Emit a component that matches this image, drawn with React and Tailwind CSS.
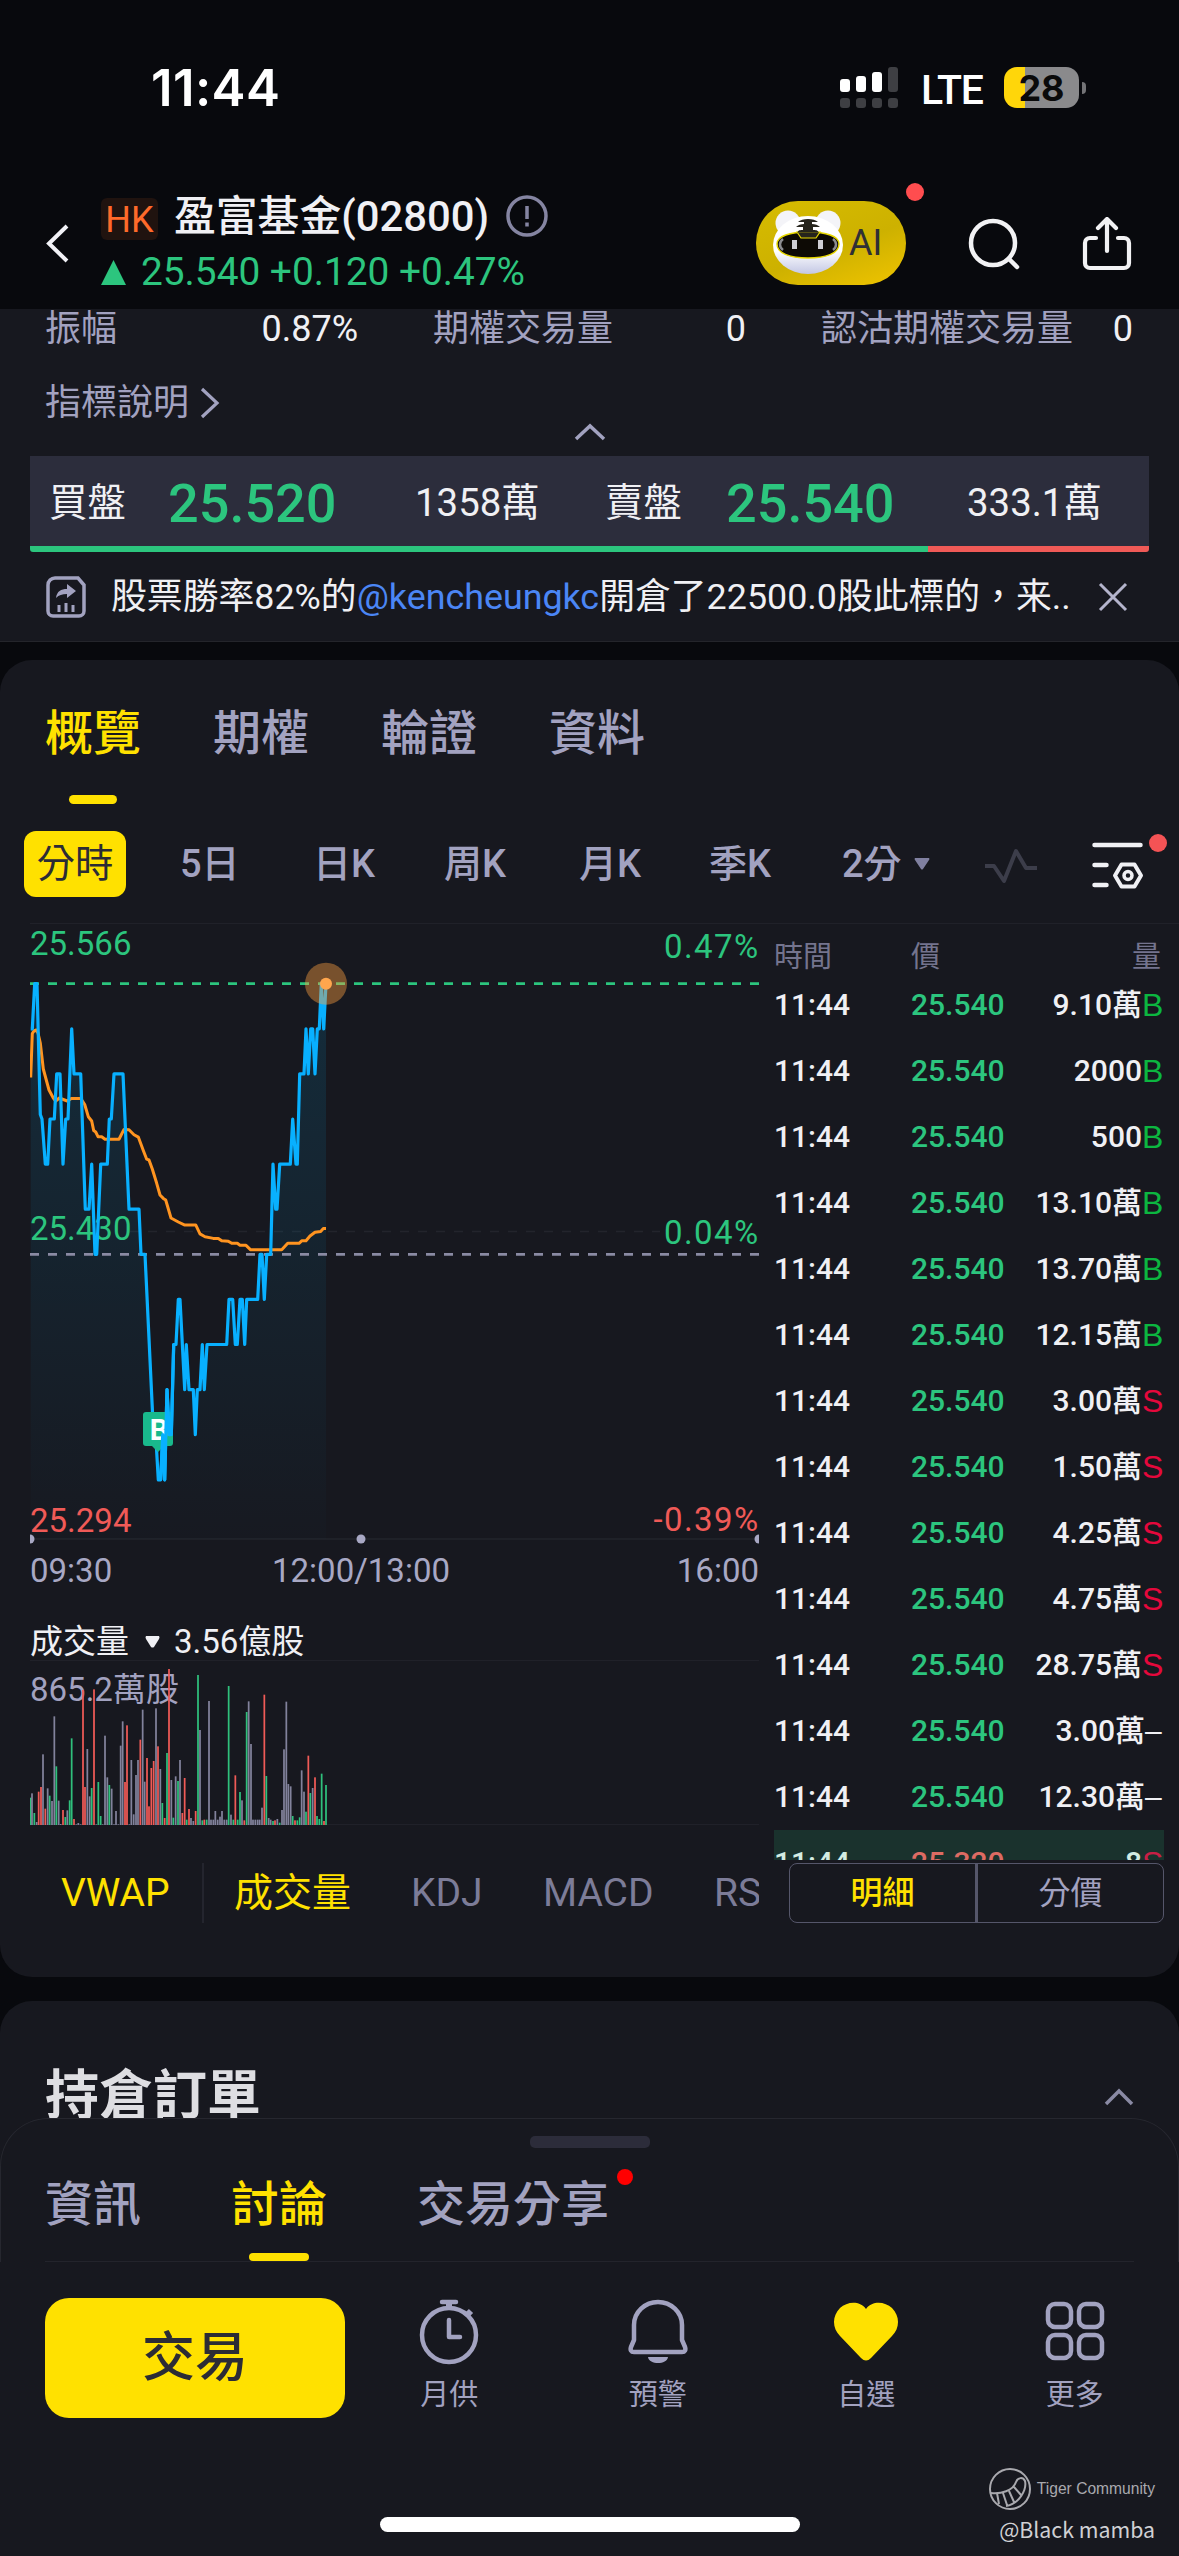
const LINE_TOP = 983.7;
const TICK = 45.1;

// [x, ticks below the day high]
const PRICE = [
  [30.7, 1], [32.3, 1], [34.7, 0], [37, 0], [40.3, 2.9], [42, 3], [45.3, 4], [47.7, 4], [50, 3], [54.3, 3], [56.7, 2], [60, 2],
  [63, 4], [65.7, 3], [68, 3], [71.7, 1], [74, 2], [80.7, 2], [85.3, 5], [89, 5], [91.7, 4], [95, 6], [96.7, 6], [100.7, 4],
  [107.3, 4], [109.3, 3], [111.3, 3], [114, 2], [123, 2], [129, 5], [139, 5], [141, 6], [145, 6], [152.7, 9.6], [155.7, 10],
  [158.3, 11], [160.7, 11], [162.7, 10], [164.7, 11], [167, 9], [169.3, 10], [171.3, 10], [173.7, 8], [176, 8], [178.3, 7],
  [180, 7], [184.7, 9], [186.3, 8], [189, 9], [193.3, 9], [195.3, 10], [197.3, 9], [200, 9], [202.3, 8], [204.3, 9], [207, 8],
  [226.7, 8], [229, 7], [232.7, 7], [235.3, 8], [237.3, 8], [240, 7], [242.3, 7], [244.7, 8], [246.7, 7], [257.7, 7], [260, 6],
  [262, 6], [264.3, 7], [266.7, 6], [270.7, 6], [273, 4], [275.7, 5], [277, 5], [279.7, 4], [290.3, 4], [292.7, 3], [296, 4],
  [297.3, 4], [299.7, 2], [304, 2], [306, 1], [308.3, 2], [310.7, 1], [312.7, 1], [315, 2], [317.3, 1], [319.3, 1], [321.3, 0],
  [323.7, 1], [326, 0],
];

const VWAP = [
  [30.7, 1077.5], [32.3, 1033.5], [34, 1031], [36.3, 1030], [38, 1033], [40.3, 1043], [43.3, 1069], [49, 1090], [53.3, 1098],
  [55.7, 1101], [59.3, 1098], [63.3, 1099.5], [67.3, 1101], [71.3, 1098.4], [80.7, 1098.4], [84.7, 1104.5], [88.3, 1116.7],
  [91.7, 1121], [93.7, 1130.6], [95.7, 1132], [98, 1136.7], [101.7, 1136.7], [105, 1139.2], [119, 1139.2], [124, 1129.4],
  [129, 1129.8], [134, 1134.7], [138.3, 1137.1], [143.3, 1150.6], [146.7, 1159.2], [149, 1160], [152.3, 1169], [156.7, 1183.3],
  [160, 1195], [163.3, 1198.4], [165.7, 1200], [171, 1218], [178.3, 1222], [184.3, 1224.9], [195.7, 1224.9], [200, 1233.9],
  [205, 1236.7], [213.3, 1238.4], [218.3, 1238.4], [221.7, 1240.8], [228.3, 1241.2], [231.7, 1243.3], [237.3, 1243.3],
  [240, 1245.3], [246, 1245.3], [250.7, 1249.8], [281.7, 1249.8], [287.7, 1243.3], [299, 1243.3], [301.7, 1240.8], [306, 1240.8],
  [310, 1236], [315, 1232.3], [320.7, 1231.4], [323.3, 1228.6], [326, 1228.6],
];

const BAR_COLOR = { g: '#2fc07c', r: '#f05a57', p: '#82829c' };

// x, top, colour on a 3x grid, baseline at 852
const VOLUME =
  '92 770 g,96 757 p,103 816 g,110 843 p,116 752 r,123 738 r,129 640 p,136 803 r,143 742 p,149 764 g,156 780 p,163 526 p,169 676 g,176 779 p,182 849 p,189 807 r,196 828 g,202 808 p,209 778 g,215 592 g,222 834 r,229 850 p,235 846 p,242 850 p,249 447 r,255 738 r,262 624 p,269 766 p,275 741 g,282 445 r,289 850 p,295 723 g,302 825 g,308 850 p,315 584 p,322 709 p,328 732 g,335 743 p,342 850 p,348 810 p,355 850 p,362 614 p,368 541 p,375 723 r,381 553 r,388 850 p,394 657 p,401 820 p,408 702 p,414 657 p,421 596 r,428 506 p,434 722 p,441 651 r,447 796 r,454 681 r,461 660 r,468 502 p,474 616 r,481 684 p,487 786 g,494 831 r,501 636 g,507 384 r,514 717 p,520 830 g,527 706 p,534 720 g,540 657 p,547 816 r,554 711 r,560 836 g,567 804 r,573 831 p,580 840 p,587 810 r,594 402 g,600 567 p,607 838 g,613 836 r,620 836 g,627 480 p,633 836 p,640 836 p,646 810 p,653 836 p,660 827 p,666 810 p,673 836 p,680 836 p,686 435 g,693 821 p,700 836 g,706 703 r,713 836 g,720 753 g,726 778 p,733 838 r,740 513 g,746 481 p,753 609 p,759 836 p,766 836 p,773 836 p,779 836 p,786 800 p,793 461 r,799 705 g,806 831 p,812 836 p,819 840 g,825 838 r,832 834 p,839 845 g,846 807 p,852 625 p,859 482 p,865 729 p,872 736 p,878 825 g,885 838 r,892 838 g,899 829 g,905 688 p,912 752 p,918 812 g,925 644 r,931 756 g,938 741 p,945 709 r,951 825 g,958 834 g,965 698 g,972 840 r,978 732 g'
    .split(',')
    .map((s) => s.split(' '));

const TRADES = [
  ['9.10萬', 'B'],
  ['2000', 'B'],
  ['500', 'B'],
  ['13.10萬', 'B'],
  ['13.70萬', 'B'],
  ['12.15萬', 'B'],
  ['3.00萬', 'S'],
  ['1.50萬', 'S'],
  ['4.25萬', 'S'],
  ['4.75萬', 'S'],
  ['28.75萬', 'S'],
  ['3.00萬', '–'],
  ['12.30萬', '–'],
];

const toPoints = (data) => data.map(([x, t]) => `${x},${(LINE_TOP + t * TICK).toFixed(1)}`).join(' ');

function StatusBar() {
  return (
    <div className="flex h-[160px] shrink-0 items-start pt-[60px] font-['Inter'] text-white">
      <div className="ml-[151px] w-[689px] text-[51px] leading-[56px] font-semibold tracking-[0.4px]">11:44</div>
      <svg className="mt-[7px] h-[41px] w-[58px]" viewBox="0 0 58 41">
        <g fill="#fff">
          <rect x="0" y="12" width="10" height="13" rx="3" />
          <rect x="16" y="9" width="10" height="16" rx="3" />
          <rect x="32" y="5" width="10" height="20" rx="3" />
        </g>
        <g fill="#3e3f43">
          <rect x="48" y="0" width="10" height="25" rx="3" />
          <rect x="0" y="31" width="10" height="10" rx="3" />
          <rect x="16" y="31" width="10" height="10" rx="3" />
          <rect x="32" y="31" width="10" height="10" rx="3" />
          <rect x="48" y="31" width="10" height="10" rx="3" />
        </g>
      </svg>
      <div className="ml-[23px] w-[83px] font-['Roboto'] text-[41px] leading-[60px] font-medium tracking-[-1.2px]">LTE</div>
      <div className="mt-[7px] flex h-[41px] w-[75px] items-center justify-center overflow-hidden rounded-[13px] bg-[linear-gradient(90deg,#ffd60a_21px,#8a8a8c_21px)] text-[36px] leading-none font-bold text-[#0a0a0a]">
        28
      </div>
      <div className="mt-[22px] ml-[3px] h-[12px] w-[4px] rounded-r-full bg-[#737376]" />
    </div>
  );
}

function TigerBot() {
  return (
    <svg className="h-[66px] w-[72px]" viewBox="0 0 72 66">
      <defs>
        <linearGradient id="bot" x1="0" y1="0" x2="0" y2="1">
          <stop offset="0.6" stopColor="#fff" />
          <stop offset="1" stopColor="#c3c7e4" />
        </linearGradient>
      </defs>
      <circle cx="15" cy="13" r="12.500" fill="#f4f4f8" />
      <circle cx="55" cy="13" r="12.500" fill="#f4f4f8" />
      <ellipse cx="35" cy="35" rx="35" ry="29" fill="url(#bot)" />
      <path d="M4 34c0-8 13-12 31-12s31 4 31 12c0 9-12 14-31 14S4 43 4 34Z" fill="#0d0a05" stroke="#e8d800" strokeWidth="1.500" />
      <path d="M24 22l4 6h15l4-6Z" fill="#26241c" stroke="#e8d800" strokeWidth="1.200" />
      <path d="M35 9c-4 0-8 1-10 3h6v2c-3 0-6 1-8 3h7v3c-3 0-4 0-6 2.500h22c-2-2.500-3-2.500-6-2.500v-3h7c-2-2-5-3-8-3v-2h6c-2-2-6-3-10-3Z" fill="#26241c" />
      <path d="M10 29c-4 3-4 8 0 11M60 29c4 3 4 8 0 11" stroke="#8d8d90" strokeWidth="2.500" fill="none" />
      <rect x="19" y="30" width="5" height="9" fill="#cfcfd4" />
      <rect x="45" y="30" width="5" height="9" fill="#cfcfd4" />
    </svg>
  );
}

function Header() {
  return (
    <div className="flex h-[149px] shrink-0">
      <svg className="mt-[64px] ml-[46px] h-[39px] w-[24px]" viewBox="0 0 24 39" fill="none" stroke="#f2f2f7" strokeWidth="4">
        <path d="M21 2L3 19.500L21 37" />
      </svg>
      <div className="ml-[31px] w-[655px]">
        <div className="mt-[32px] flex h-[48px] items-center">
          <span className="mt-[6px] flex h-[42px] w-[57px] items-center justify-center rounded-[6px] bg-[#20130f] pt-[2px] text-[36px] leading-none text-[#ff6a2a]">HK</span>
          <span className="ml-[16px] w-[332px] pt-px text-[41.800px] leading-[48px] font-medium whitespace-nowrap">盈富基金(02800)</span>
          <svg className="h-[42px] w-[42px]" viewBox="0 0 42 42" fill="none" stroke="#8585a2" strokeWidth="3.500">
            <circle cx="21" cy="21" r="19" />
            <path d="M21 11v13M21 27.500v4" />
          </svg>
        </div>
        <div className="mt-[9px] flex h-[46px] items-center text-[#2cc57e]">
          <svg className="h-[25px] w-[25px]" viewBox="0 0 25 25">
            <path d="M12.500 0L25 25H0Z" fill="currentColor" />
          </svg>
          <span className="ml-[15px] text-[38.800px] leading-[46px] whitespace-nowrap">25.540 +0.120 +0.47%</span>
        </div>
      </div>
      <div className="relative mt-[41px] flex h-[84px] w-[150px] items-center rounded-full bg-[linear-gradient(160deg,#d6bc00_0%,#cdb100_55%,#f0c400_100%)] pl-[17px]">
        <TigerBot />
        <span className="ml-[4px] text-[36px] leading-none text-[#2f2f35]">AI</span>
        <span className="absolute -top-[18px] -right-[18px] h-[18px] w-[18px] rounded-full bg-[#ff4d4f]" />
      </div>
      <svg className="mt-[58px] ml-[62px] h-[52px] w-[52px]" viewBox="0 0 52 52" fill="none" stroke="#f2f2f4" strokeWidth="4.500" strokeLinecap="round">
        <circle cx="25" cy="25" r="22" />
        <path d="M41 41l8 8" />
      </svg>
      <svg className="mt-[57px] ml-[62px] h-[54px] w-[50px]" viewBox="0 0 50 54" fill="none" stroke="#f2f2f4" strokeWidth="4.200" strokeLinecap="round" strokeLinejoin="round">
        <path d="M14 21H8c-3 0-5 2-5 5v20c0 3 2 5 5 5h34c3 0 5-2 5-5V26c0-3-2-5-5-5h-6M25 34V3M16 11l9-9 9 9" />
      </svg>
    </div>
  );
}

function QuotePanel() {
  return (
    <div className="flex h-[333px] shrink-0 flex-col border-b border-[#24252b] bg-[#17181f] text-[36px]">
      <div className="flex h-[38px] items-center pt-[2px] leading-[36px] whitespace-nowrap">
        <span className="ml-[45px] text-[#a2a2c0]">振幅</span>
        <span className="w-[241px] text-right">0.87%</span>
        <span className="ml-[75px] text-[#a2a2c0]">期權交易量</span>
        <span className="w-[133px] text-right">0</span>
        <span className="ml-[75px] text-[#a2a2c0]">認沽期權交易量</span>
        <span className="w-[60px] text-right">0</span>
      </div>
      <div className="mt-[38px] flex h-[36px] items-center leading-[36px] text-[#a2a2c0]">
        <span className="ml-[45px]">指標說明</span>
        <svg className="ml-[11px] h-[32px] w-[20px]" viewBox="0 0 20 32" fill="none" stroke="#a2a2c0" strokeWidth="3.200">
          <path d="M2 2l15 14L2 30" />
        </svg>
      </div>
      <svg className="mx-auto mt-[2px] h-[18px] w-[32px]" viewBox="0 0 32 18" fill="none" stroke="#a2a2c0" strokeWidth="3.500">
        <path d="M2 16L16 3l14 13" />
      </svg>
      <div className="mx-[30px] mt-[15px] flex h-[90px] items-center bg-[#2c2d3c] pt-[4px] text-[38.400px] whitespace-nowrap">
        <span className="ml-[19px] w-[119px]">買盤</span>
        <span className="w-[247px] text-[54px] font-medium text-[#2cc57e]">25.520</span>
        <span className="w-[190px]">1358萬</span>
        <span className="w-[121px]">賣盤</span>
        <span className="w-[241px] text-[54px] font-medium text-[#2cc57e]">25.540</span>
        <span>333.1萬</span>
      </div>
      <div className="mx-[30px] flex h-[6px] overflow-hidden rounded-b-[3px]">
        <div className="w-[898px] bg-[#2cc57e]" />
        <div className="flex-1 bg-[#f05a57]" />
      </div>
      <div className="flex flex-1 items-center whitespace-nowrap">
        <svg className="ml-[46px] h-[42px] w-[40px]" viewBox="0 0 40 42" fill="none" stroke="#a2a2c0" strokeWidth="3.500">
          <path d="M9 2h23l6 7v26a5 5 0 0 1-5 5H7a5 5 0 0 1-5-5V9a7 7 0 0 1 7-7Z" />
          <path d="M10 22c1-7 5-9 11-9V8l9 7-9 7v-4c-5 0-8 1-11 4Z" fill="#a2a2c0" stroke="none" />
          <path d="M13 29v7M20 27v9M27 29v7" strokeWidth="3" />
        </svg>
        <span className="ml-[25px] w-[987px] text-[35.850px] leading-[44px]">
          股票勝率82%的<span className="text-[#4b86f5]">@kencheungkc</span>開倉了22500.0股此標的，来..
        </span>
        <svg className="h-[30px] w-[30px]" viewBox="0 0 30 30" fill="none" stroke="#b4b4cc" strokeWidth="3">
          <path d="M2 2l26 26M28 2L2 28" />
        </svg>
      </div>
    </div>
  );
}

function PriceChart() {
  const line = toPoints(PRICE);
  return (
    <svg className="block h-[676px] w-[729px] font-['Roboto']" viewBox="30 924 729 676" fontSize="33">
      <defs>
        <linearGradient id="area" x1="0" y1="983" x2="0" y2="1539" gradientUnits="userSpaceOnUse">
          <stop offset="0" stopColor="#00a8e8" stopOpacity="0.14" />
          <stop offset="1" stopColor="#00a8e8" stopOpacity="0.01" />
        </linearGradient>
      </defs>
      <path d="M30 1539H759" stroke="#23242c" strokeWidth="1.500" />
      <path d="M130 1231.400H660" stroke="#23242c" strokeWidth="1.500" strokeDasharray="9 9" />
      <polygon points={`30.700,1539 ${line} 326,1539`} fill="url(#area)" />
      <g fill="#2cc57e">
        <text x="30" y="955">25.566</text>
        <text x="30" y="1239.500">25.430</text>
        <text x="759.500" y="958.300" textAnchor="end" letterSpacing="1.400">0.47%</text>
        <text x="759.500" y="1243.700" textAnchor="end" letterSpacing="1.400">0.04%</text>
      </g>
      <g fill="#f05a57">
        <text x="30" y="1531.500">25.294</text>
        <text x="759.500" y="1530.800" textAnchor="end" letterSpacing="1.400">-0.39%</text>
      </g>
      <path d={`M30 ${LINE_TOP}H759`} stroke="#2cc57e" strokeWidth="2.800" strokeDasharray="9 9" />
      <path d="M30 1254.300H759" stroke="#8a8aa3" strokeWidth="2.800" strokeDasharray="9 9" />
      <polyline points={VWAP.map((p) => p.join(',')).join(' ')} fill="none" stroke="#ff9420" strokeWidth="3" strokeLinejoin="round" />
      <polyline points={line} fill="none" stroke="#08b0ff" strokeWidth="3.200" strokeLinejoin="round" />
      <path d="M146 1412h24q3 0 3 3v28q0 3-3 3h-6l-6 6-6-6h-6q-3 0-3-3v-28q0-3 3-3Z" fill="#19b98c" />
      <text x="159" y="1440" fontSize="29" fontWeight="700" fill="#fff" textAnchor="middle">B</text>
      <polyline points={toPoints(PRICE.slice(36, 44))} fill="none" stroke="#08b0ff" strokeWidth="3.200" strokeLinejoin="round" />
      <circle cx="326" cy={LINE_TOP} r="21" fill="#ffa240" fillOpacity="0.42" />
      <circle cx="326" cy={LINE_TOP} r="6" fill="#ffa64d" />
      <g fill="#a8a8c4">
        <circle cx="30" cy="1539" r="4.500" />
        <circle cx="361" cy="1539" r="4.500" />
        <circle cx="759" cy="1539" r="4.500" />
        <text x="30" y="1582">09:30</text>
        <text x="361" y="1582" textAnchor="middle">12:00/13:00</text>
        <text x="759" y="1582" textAnchor="end">16:00</text>
      </g>
    </svg>
  );
}

function VolumeChart() {
  return (
    <div className="relative h-[165px] border-t border-b border-[#202129]">
      <div className="pt-[9px] text-[33px] leading-[40px] text-[#a2a2c0]">865.2萬股</div>
      <svg className="absolute top-0 left-0 h-[164px] w-[729px]" viewBox="90 360 2187 492">
        {VOLUME.map(([x, top, c]) => (
          <rect key={x} x={x - 2.6} y={top} width="5.200" height={852 - top} fill={BAR_COLOR[c]} />
        ))}
      </svg>
    </div>
  );
}

function TradeTable() {
  return (
    <div className="ml-[15px] w-[390px]">
      <div className="flex h-[48px] items-center pt-[17px] text-[29px] leading-[30px] text-[#74748e]">
        <span className="w-[137px]">時間</span>
        <span className="flex-1">價</span>
        <span className="mr-[3px]">量</span>
      </div>
      <div className="h-[888px] overflow-hidden text-[30px] font-medium whitespace-nowrap">
        {TRADES.map(([vol, side], i) => (
          <div key={i} className="flex h-[66px] items-center leading-[30px]">
            <span className="w-[137px]">11:44</span>
            <span className="flex-1 text-[#2cc57e]">25.540</span>
            <span>{vol}</span>
            <span
              className={
                side === 'B'
                  ? "w-[22px] font-['Liberation_Sans'] text-[32px] font-normal text-[#0cb640]"
                  : side === 'S'
                    ? "w-[22px] font-['Liberation_Sans'] text-[32px] font-normal text-[#e5083c]"
                    : "mr-px w-[18px] font-['Liberation_Sans'] font-normal"
              }
            >
              {side}
            </span>
          </div>
        ))}
        <div className="flex h-[66px] items-center bg-[#1a322d] leading-[30px]">
          <span className="w-[137px] text-[#d3ece2]">11:44</span>
          <span className="flex-1 text-[#dd6b63]">25.320</span>
          <span className="text-[#d3ece2]">8</span>
          <span className="w-[22px] font-['Liberation_Sans'] text-[32px] font-normal text-[#c81f45]">S</span>
        </div>
      </div>
      <div className="mt-[3px] ml-[15px] flex h-[60px] items-center rounded-[8px] border border-[#55566a] text-center text-[32px] leading-none">
        <span className="flex-1 font-medium text-[#ffe100]">明細</span>
        <span className="h-full w-[3px] bg-[#55566a]" />
        <span className="flex-1 text-[#a2a2c0]">分價</span>
      </div>
    </div>
  );
}

function ChartCard() {
  return (
    <div className="mt-[18px] flex h-[1317px] shrink-0 flex-col rounded-[32px] bg-[#17181f]">
      <div className="flex h-[144px] gap-[72px] pt-[46px] pl-[45px] text-[48px] leading-[56px] font-medium text-[#a2a2c0]">
        <div className="flex flex-col items-center text-[#ffe100]">
          概覽
          <span className="mt-[33px] h-[9px] w-[48px] rounded-full bg-[#ffe100]" />
        </div>
        <span>期權</span>
        <span>輪證</span>
        <span>資料</span>
      </div>
      <div className="flex h-[119px] items-center pt-px pl-[24px] text-[38px] leading-none font-medium whitespace-nowrap text-[#a2a2c0]">
        <span className="flex h-[66px] w-[102px] items-center justify-center rounded-[12px] bg-[#ffe100] text-[38.500px] font-normal text-[#2c2c35]">分時</span>
        <span className="ml-[54px] w-[133px]">5日</span>
        <span className="w-[131px]">日K</span>
        <span className="w-[135px]">周K</span>
        <span className="w-[130px]">月K</span>
        <span className="w-[133px]">季K</span>
        <span className="w-[72px]">2分</span>
        <svg className="h-[12px] w-[16px]" viewBox="0 0 16 12">
          <path d="M1 0h14q1 1 0 2L9 11q-1 1-2 0L1 2q-1-1 0-2Z" fill="#8080a0" />
        </svg>
        <svg className="mt-[4px] ml-[55px] h-[36px] w-[52px]" viewBox="0 0 52 36" fill="none" stroke="#3c3d4a" strokeWidth="4" strokeLinejoin="round">
          <path d="M0 18h9l10 15L31 3l10 17h11" />
        </svg>
        <div className="relative mt-[4px] ml-[55px]">
          <svg className="h-[50px] w-[52px]" viewBox="0 0 52 50" fill="none" stroke="#f0f0f4" strokeWidth="4.500" strokeLinecap="round">
            <path d="M2.500 4h46M2.500 24h12M2.500 44h12" />
            <path d="M29.500 23.500h13l6.500 11-6.500 11h-13l-6.500-11z" strokeLinejoin="round" strokeWidth="4" />
            <circle cx="36" cy="34.500" r="4" strokeWidth="3.500" />
          </svg>
          <span className="absolute -top-[7px] -right-[23px] h-[18px] w-[18px] rounded-full bg-[#f45355]" />
        </div>
      </div>
      <div className="ml-[30px] flex border-t border-[#202129]">
        <div className="w-[729px]">
          <PriceChart />
          <div className="flex h-[60px] items-center pt-[23px] text-[33px] leading-[34px]">
            <span>成交量</span>
            <svg className="mr-[14px] ml-[16px] h-[12px] w-[15px]" viewBox="0 0 15 12">
              <path d="M1 0h13q1 1 0 3L9 11q-1.500 1-3 0L1 3q-1-2 0-3Z" fill="#f0f0f4" />
            </svg>
            <span>3.56億股</span>
          </div>
          <VolumeChart />
          <div className="mt-[38px] flex h-[60px] items-center overflow-hidden text-[39px] leading-none whitespace-nowrap text-[#7c7c98]">
            <span className="ml-[31px] w-[141px] shrink-0 text-[#ffe100]">VWAP</span>
            <span className="h-full w-[2px] shrink-0 bg-[#24252e]" />
            <span className="ml-[30px] w-[177px] shrink-0 text-[#ffe100]">成交量</span>
            <span className="w-[132px] shrink-0">KDJ</span>
            <span className="w-[171px] shrink-0">MACD</span>
            <span className="shrink-0">RSI</span>
          </div>
        </div>
        <TradeTable />
      </div>
    </div>
  );
}

function BottomSheet() {
  return (
    <div className="relative -mt-[64px] flex flex-1 flex-col rounded-t-[48px] bg-[#17181f]">
      <div className="h-[144px] rounded-t-[48px] border-x border-t border-[#26272f]">
        <div className="mx-auto mt-[17px] h-[12px] w-[120px] rounded-[5px] bg-[#2c2c3a]" />
        <div className="mx-[44px] mt-[24px] flex h-[90px] border-b border-[#23242c] pt-[5px] text-[48px] leading-[56px] font-medium text-[#a2a2c0]">
          <span>資訊</span>
          <div className="ml-[90px] flex flex-col items-center text-[#ffe100]">
            討論
            <span className="mt-[20px] h-[9px] w-[60px] rounded-full bg-[#ffe100]" />
          </div>
          <div className="relative ml-[90px]">
            交易分享
            <span className="absolute -top-[8px] -right-[24px] h-[16px] w-[16px] rounded-full bg-[#ff0000]" />
          </div>
        </div>
      </div>
      <div className="mt-[36px] flex h-[120px]">
        <div className="ml-[45px] flex w-[300px] items-center justify-center rounded-[24px] bg-[#ffe100] text-[53px] leading-none font-medium text-[#2c2c35]">交易</div>
        <div className="grid flex-1 grid-cols-4 text-[29px] leading-[34px] text-[#a2a2c0]">
          <div className="flex flex-col items-center">
            <svg className="mt-[1px] mb-[13px] h-[66px] w-[60px]" viewBox="0 0 60 66" fill="none" stroke="#a2a2c0" strokeWidth="4.500">
              <circle cx="30" cy="36" r="27" />
              <path d="M30 21v17h11" strokeLinejoin="round" strokeLinecap="round" />
              <path d="M23 3h14" strokeWidth="4.500" strokeLinecap="round" />
              <path d="M30 4v6M48 16l4-4" strokeWidth="6" />
            </svg>
            月供
          </div>
          <div className="flex flex-col items-center">
            <svg className="mt-[1px] mb-[13px] h-[66px] w-[60px]" viewBox="0 0 60 66" fill="none" stroke="#a2a2c0" strokeWidth="4.500" strokeLinejoin="round">
              <path d="M30 3C17 3 6 13 6 26v15L3 48c-1 3 0 5 3 5h48c3 0 4-2 3-5l-3-7V26C54 13 43 3 30 3Z" />
              <path d="M20 58c1 8 19 8 20 0Z" fill="#a2a2c0" stroke="none" />
            </svg>
            預警
          </div>
          <div className="flex flex-col items-center">
            <svg className="mt-[1px] mb-[13px] h-[66px] w-[66px]" viewBox="0 0 66 66">
              <path d="M33 10C26 1 14 3 7 9c-8 8-8 20 0 28l21 22q5 5 10 0l21-22c8-8 8-20 0-28C52 3 40 1 33 10Z" fill="#ffe100" />
            </svg>
            自選
          </div>
          <div className="flex flex-col items-center">
            <svg className="mt-[1px] mb-[13px] h-[66px] w-[60px]" viewBox="0 0 60 66" fill="none" stroke="#a2a2c0" strokeWidth="4.500">
              <rect x="3" y="5" width="23" height="23" rx="7" />
              <rect x="34" y="5" width="23" height="23" rx="7" />
              <rect x="3" y="36" width="23" height="23" rx="7" />
              <rect x="34" y="36" width="23" height="23" rx="7" />
            </svg>
            更多
          </div>
        </div>
      </div>
      <div className="absolute bottom-[24px] left-[380px] h-[15px] w-[420px] rounded-full bg-white" />
      <div className="absolute right-[24px] bottom-[10px] flex flex-col items-end">
        <div className="flex items-center gap-[6px] font-['Liberation_Sans'] text-[15.600px] leading-none text-[#a9a9ae]">
          <svg className="h-[42px] w-[42px]" viewBox="0 0 42 42" fill="none" stroke="#a9a9ae" strokeWidth="2">
            <circle cx="21" cy="21" r="20" />
            <path d="M2 25c10 1 22-2 25-11 2-5 7-5 9-1 2 9-6 23-19 25M8 25l2 11M14 25l4 12M20 23l5 11M25 19l7 8" />
          </svg>
          Tiger Community
        </div>
        <div className="mt-[2px] font-['Noto_Sans_CJK_TC'] text-[21.300px] leading-[34px] text-[#d0d0d4]">@Black mamba</div>
      </div>
    </div>
  );
}

export default function App() {
  return (
    <div className="flex h-[2556px] w-[1179px] flex-col overflow-hidden bg-[#08090d] font-['Roboto','Noto_Sans_CJK_TC',sans-serif] text-[#f0f0f4]">
      <StatusBar />
      <Header />
      <QuotePanel />
      <ChartCard />
      <div className="mt-[24px] flex h-[181px] shrink-0 items-start justify-between rounded-t-[32px] bg-[#17181f] pt-[64px] pr-[45px] pl-[45px] text-[54px] leading-[64px] font-bold text-[#dedee2]">
        持倉訂單
        <svg className="mt-[23px] h-[18px] w-[30px]" viewBox="0 0 30 18" fill="none" stroke="#8a8aa4" strokeWidth="3.500">
          <path d="M2 16L15 3l13 13" />
        </svg>
      </div>
      <BottomSheet />
    </div>
  );
}
